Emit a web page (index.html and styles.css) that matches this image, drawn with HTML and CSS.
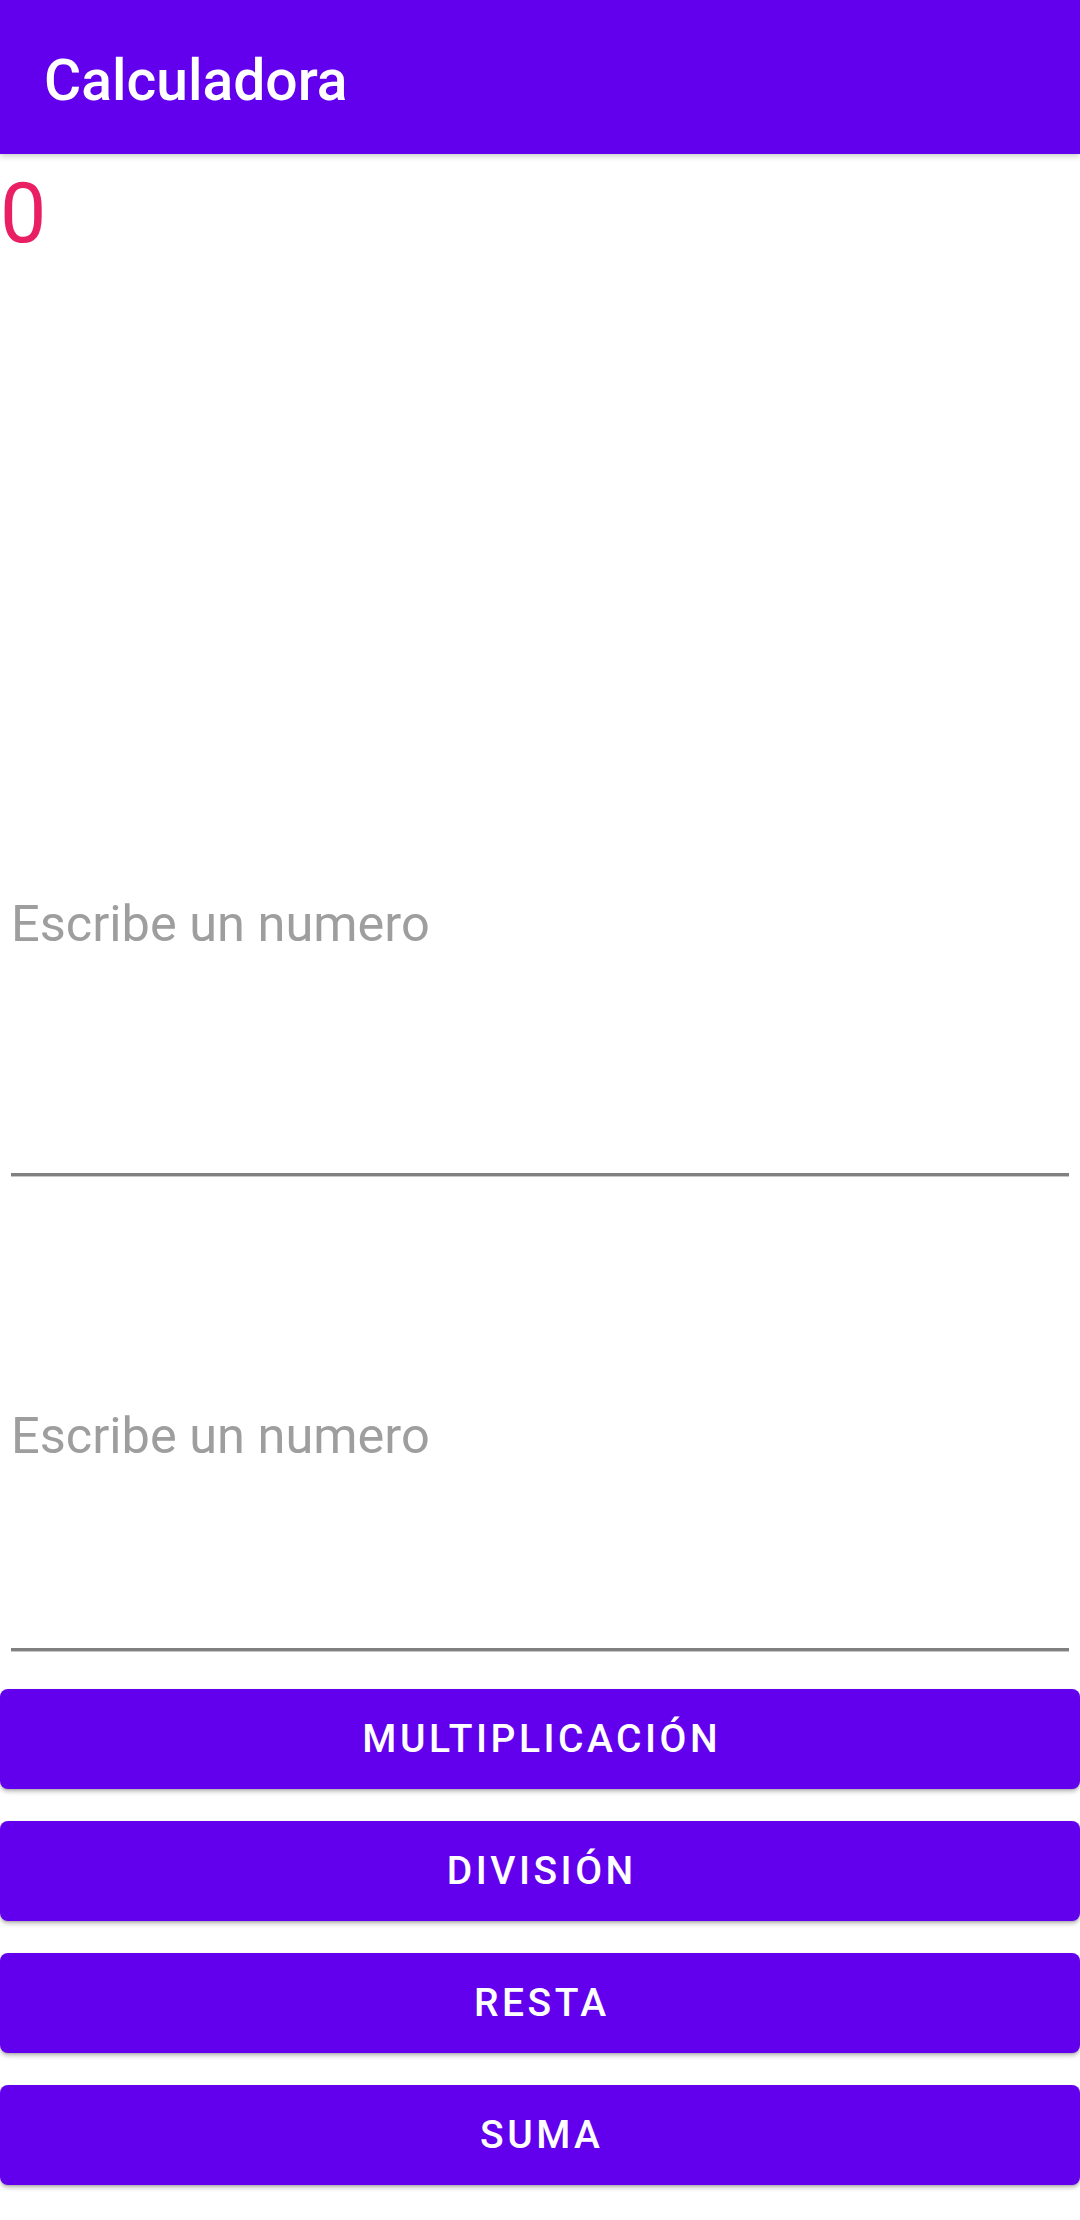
FILE: index.html
```html
<!DOCTYPE html>
<html lang="es">
<head>
<meta charset="utf-8">
<title>Calculadora</title>
<link rel="stylesheet" href="styles.css">
</head>
<body>
<div class="app">
  <header class="toolbar">
    <h1 class="toolbar-title">Calculadora</h1>
  </header>
  <main class="content">
    <div class="result">0</div>
    <div class="field field-first">
      <div class="placeholder">Escribe un numero</div>
      <div class="underline"></div>
    </div>
    <div class="field field-second">
      <div class="placeholder">Escribe un numero</div>
      <div class="underline"></div>
    </div>
    <div class="buttons">
      <button class="btn">MULTIPLICACIÓN</button>
      <button class="btn">DIVISIÓN</button>
      <button class="btn">RESTA</button>
      <button class="btn">SUMA</button>
    </div>
  </main>
</div>
</body>
</html>
```
FILE: styles.css
```css
html, body {
  margin: 0;
  padding: 0;
  background: #ffffff;
}
body {
  font-family: Roboto, "Noto Sans", "Liberation Sans", sans-serif;
  width: 1080px;
  height: 2220px;
  overflow: hidden;
}
.app {
  display: flex;
  flex-direction: column;
}
.toolbar {
  position: relative;
  z-index: 2;
  height: 154px;
  box-sizing: border-box;
  background: #6200ee;
  padding: 47px 0 0 44px;
  box-shadow: 0 2px 6px rgba(0, 0, 0, 0.22);
}
.toolbar-title {
  margin: 0;
  font-size: 57px;
  font-weight: 500;
  color: #ffffff;
  line-height: normal;
}
.content {
  display: flex;
  flex-direction: column;
}
.result {
  margin-top: 11px;
  height: 730px;
  font-size: 82.5px;
  line-height: normal;
  color: #e91e63;
}
.field {
  display: flex;
  flex-direction: column;
  justify-content: space-between;
  padding: 0 11px;
}
.field-first {
  height: 281px;
}
.field-second {
  margin-top: 231px;
  height: 244px;
}
.placeholder {
  font-size: 50.5px;
  line-height: normal;
  color: #9e9e9e;
  margin-top: -1px;
}
.underline {
  height: 3px;
  background: #808080;
  box-shadow: 0 1px 0 #c8c8c8;
}
.buttons {
  margin-top: 38px;
  display: flex;
  flex-direction: column;
  gap: 32px;
}
.btn {
  display: flex;
  align-items: center;
  justify-content: center;
  width: 100%;
  height: 100px;
  border: none;
  border-radius: 8px;
  background: #6200ee;
  color: #ffffff;
  font-family: Roboto, "Noto Sans", "Liberation Sans", sans-serif;
  font-size: 39px;
  font-weight: 500;
  letter-spacing: 3.5px;
  padding: 0 0 0 3.5px;
  box-shadow: 0 3px 4px rgba(0, 0, 0, 0.22), 0 1px 2px rgba(0, 0, 0, 0.15);
}
```
